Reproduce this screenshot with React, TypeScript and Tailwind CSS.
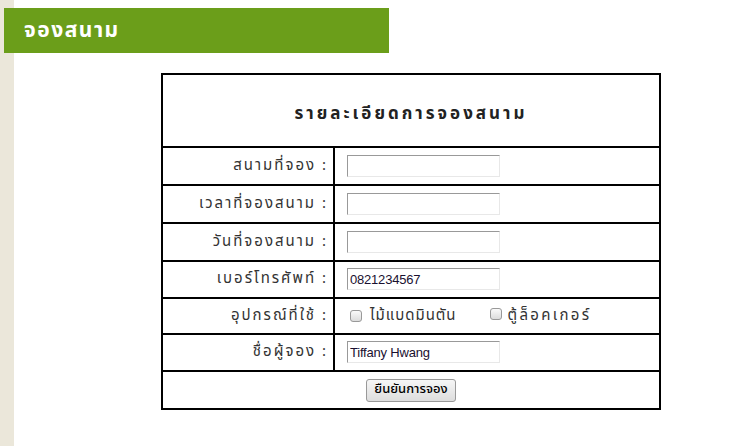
import React from 'react';

const rows = [
  { label: 'สนามที่จอง :', value: '', h: 'h-[38px]' },
  { label: 'เวลาที่จองสนาม :', value: '', h: 'h-[38px]' },
  { label: 'วันที่จองสนาม :', value: '', h: 'h-[38px]' },
  { label: 'เบอร์โทรศัพท์ :', value: '0821234567', h: 'h-[37px]' },
];

function Field({ value }: { value: string }) {
  return (
    <input
      type="text"
      defaultValue={value}
      className="h-[22px] w-[153px] border border-t-[#999] border-l-[#999] border-r-[#e8e8e8] border-b-[#e8e8e8] bg-white px-[2px] font-['Liberation_Sans',Arial,sans-serif] text-[13px] tracking-[-0.2px] text-[#1a1030] outline-none"
    />
  );
}

function Box() {
  return <span className="inline-block h-[12px] w-[12px] rounded-[3px] border border-[#999] bg-gradient-to-b from-[#fafafa] to-[#dcdcdc]"></span>;
}

export default function App() {
  return (
    <div className="min-h-[446px] bg-[linear-gradient(to_right,#ebe7da_14px,#ffffff_14px)] pt-[8px] font-['Tahoma','Noto_Sans_Thai','Noto_Sans',sans-serif]">
      {/* Header */}
      <div className="ml-[4px] flex h-[45px] w-[385px] items-center bg-[#6b9e1a] pl-[20px] text-[21px] font-bold tracking-[1.5px] text-white">
        จองสนาม
      </div>

      {/* Booking table */}
      <div className="ml-[161px] mt-[20px]">
        <table className="w-[500px] border-collapse border-2 border-black text-[15px] text-[#333]">
          <tbody>
            <tr className="h-[73px]">
              <td colSpan={2} className="border-2 border-black pt-[8px] text-center text-[17px] font-bold tracking-[3px] text-[#222]">
                รายละเอียดการจองสนาม
              </td>
            </tr>
            {rows.map((r) => (
              <tr key={r.label} className={r.h}>
                <td className="w-[172px] border-2 border-black pr-[5px] text-right tracking-[2px]">{r.label}</td>
                <td className="border-2 border-black pl-[12px]">
                  <Field value={r.value} />
                </td>
              </tr>
            ))}
            <tr className="h-[36px]">
              <td className="border-2 border-black pr-[5px] text-right tracking-[2px]">อุปกรณ์ที่ใช้ :</td>
              <td className="border-2 border-black pl-[15px]">
                <div className="flex items-center tracking-[1px]">
                  <Box />
                  <span className="ml-[8px]">ไม้แบดมินตัน</span>
                  <span className="ml-[33px]"><Box /></span>
                  <span className="ml-[6px] tracking-[2.3px]">ตู้ล็อคเกอร์</span>
                </div>
              </td>
            </tr>
            <tr className="h-[37px]">
              <td className="border-2 border-black pr-[5px] text-right tracking-[2px]">ชื่อผู้จอง :</td>
              <td className="border-2 border-black pl-[12px]">
                <Field value="Tiffany Hwang" />
              </td>
            </tr>
            <tr className="h-[38px]">
              <td colSpan={2} className="border-2 border-black text-center">
                <button className="h-[23px] rounded-[3px] border border-[#999] bg-gradient-to-b from-[#f6f6f6] to-[#dddddd] px-[7px] text-[13px] font-medium text-black">
                  ยืนยันการจอง
                </button>
              </td>
            </tr>
          </tbody>
        </table>
      </div>
    </div>
  );
}
